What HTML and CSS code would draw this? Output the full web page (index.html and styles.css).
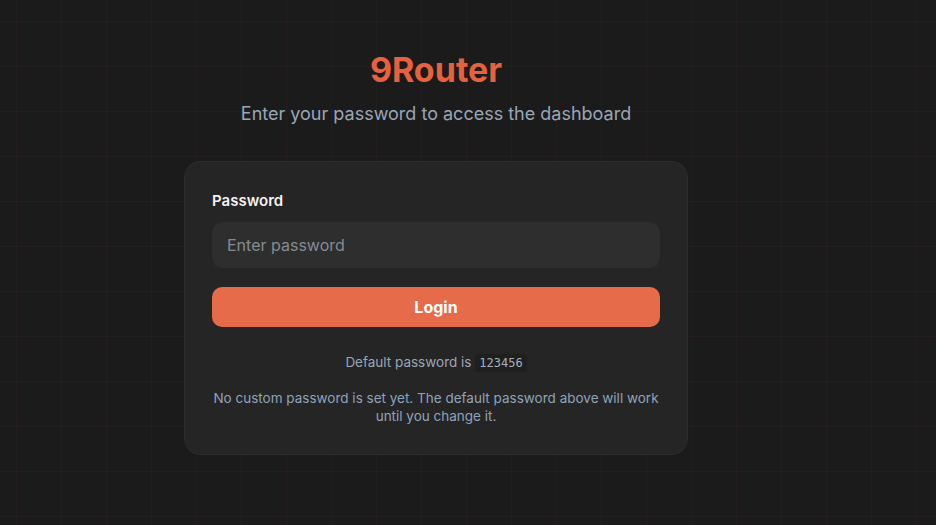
FILE: index.html
```html
<!DOCTYPE html>
<html lang="en">
<head>
<meta charset="utf-8">
<title>9Router - Login</title>
<link rel="stylesheet" href="styles.css">
</head>
<body>
<main class="page">
  <header class="hero">
    <h1 class="brand">9Router</h1>
    <p class="tagline">Enter your password to access the dashboard</p>
  </header>
  <form class="card">
    <label class="label" for="pw">Password</label>
    <input id="pw" class="input" type="password" placeholder="Enter password">
    <button class="btn" type="button">Login</button>
    <p class="hint">Default password is <code class="code">123456</code></p>
    <p class="note">No custom password is set yet. The default password above will work until you change it.</p>
  </form>
</main>
</body>
</html>
```

FILE: styles.css
```css
* { box-sizing: border-box; }
html, body { margin: 0; height: 100%; }
body {
  background-color: #1b1b1b;
  background-image:
    linear-gradient(to right, rgba(229, 103, 72, 0.04) 1px, transparent 1px),
    linear-gradient(to bottom, rgba(229, 103, 72, 0.04) 1px, transparent 1px);
  background-size: 45px 45px;
  background-position: 16px 21px;
  font-family: Inter, "Noto Sans", sans-serif;
  color: #e8e8e8;
}
.page {
  display: flex;
  flex-direction: column;
  align-items: center;
  padding-top: 50px;
  padding-right: 64px;
}
.hero { text-align: center; }
.brand {
  margin: 0;
  font-size: 34px;
  line-height: 40px;
  font-weight: 700;
  color: #e6623f;
}
.tagline {
  margin: 12px 0 0;
  font-size: 18px;
  line-height: 24px;
  color: #9aa6b6;
}
.card {
  margin-top: 35px;
  width: 504px;
  background: #252525;
  border: 1px solid #2c2c2c;
  border-radius: 16px;
  padding: 29px 27px 29px;
  display: flex;
  flex-direction: column;
}
.label {
  font-size: 15px;
  line-height: 20px;
  font-weight: 600;
  color: #f2f2f2;
}
.input {
  margin-top: 11px;
  height: 46px;
  border: none;
  outline: none;
  border-radius: 10px;
  background: #2e2e2e;
  padding: 0 15px;
  font-family: inherit;
  font-size: 16px;
  color: #e8e8e8;
}
.input::placeholder { color: #858b93; }
.btn {
  margin-top: 19px;
  height: 40px;
  border: none;
  border-radius: 10px;
  background: #e56b4b;
  color: #ffffff;
  font-family: Inter, Roboto, sans-serif;
  font-size: 16px;
  font-weight: 700;
}
.hint {
  margin: 25px 0 0;
  text-align: center;
  font-size: 13.5px;
  line-height: 20px;
  color: #9aa6b6;
}
.code {
  font-family: "DejaVu Sans Mono", monospace;
  font-size: 12px;
  background: #1f1f1f;
  color: #a6b0bd;
  padding: 2px 4px;
  border-radius: 4px;
}
.note {
  margin: 16px 0 0;
  text-align: center;
  font-size: 13.5px;
  line-height: 18px;
  color: #8fa3ba;
}
```
